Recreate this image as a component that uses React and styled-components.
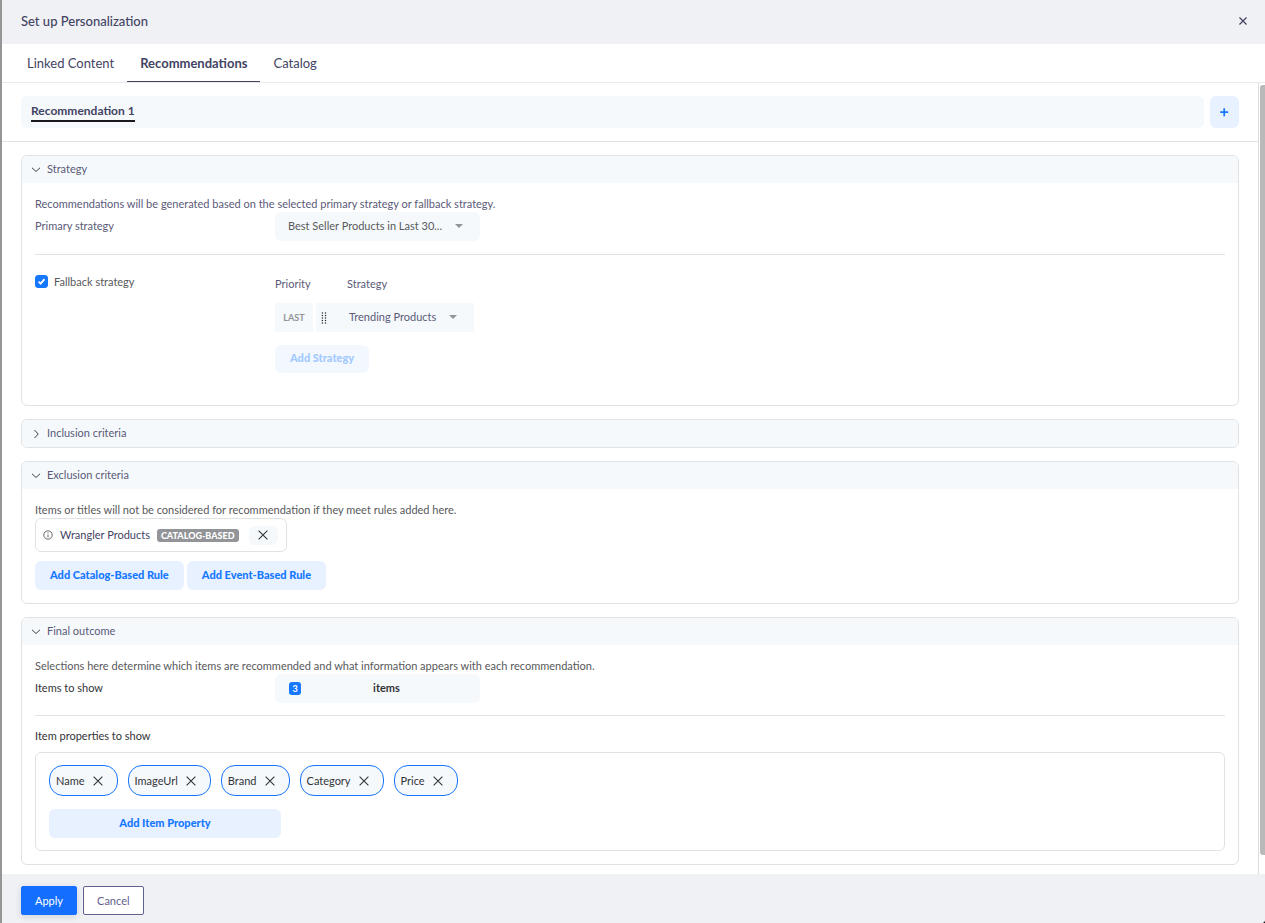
import React, { useState } from "react";
import styled, { createGlobalStyle, css, ThemeProvider } from "styled-components";

const theme = {
  colors: {
    primary: "#1677ff",
    apply: "#146eff",
    tint: "#e7f1ff",
    soft: "#f5f9fc",
    bar: "#f0f1f5",
    border: "#e1e2e4",
    heading: "#434363",
    label: "#5a5a78",
    text: "#58595b",
    dark: "#333438",
  },
  fonts: {
    main: "Lato, 'Liberation Sans', sans-serif",
  },
};

const GlobalStyle = createGlobalStyle`
  * {
    box-sizing: border-box;
  }

  body {
    margin: 0;
    background: #1d1d1f;
    font-family: ${theme.fonts.main};
    font-size: 11px;
    line-height: 16px;
    color: ${theme.colors.text};
  }

  button, input, select {
    font: inherit;
    color: inherit;
  }

  button {
    border: 0;
    padding: 0;
    background: none;
    cursor: pointer;
  }
`;

const Panel = styled.div`
  display: flex;
  flex-direction: column;
  height: 100vh;
  border-left: 2px solid #959595;
  border-bottom-right-radius: 4px;
  background: #fff;
  overflow: hidden;
`;

const Header = styled.header`
  display: flex;
  align-items: center;
  justify-content: space-between;
  flex: none;
  height: 44px;
  padding: 0 18px 3px 19px;
  background: ${({ theme }) => theme.colors.bar};
  color: ${({ theme }) => theme.colors.heading};
`;

const Title = styled.h1`
  margin: 0;
  font-size: 13px;
  line-height: 16px;
  font-weight: 500;
`;

const IconButton = styled.button`
  display: flex;
  align-items: center;
  justify-content: center;
`;

const Tabs = styled.nav`
  display: flex;
  flex: none;
  height: 39px;
  padding-left: 12px;
  border-bottom: 1px solid #e9e9f1;
`;

const Tab = styled.button`
  padding: 0 13px;
  border-bottom: 1px solid transparent;
  font-size: 13px;
  color: ${({ theme }) => theme.colors.heading};
  ${({ $active, theme }) =>
    $active &&
    css`
      font-weight: 700;
      border-bottom-color: ${theme.colors.heading};
    `}
`;

const Main = styled.div`
  display: flex;
  flex: 1;
  min-height: 0;
`;

const Scroll = styled.main`
  flex: 1;
  min-width: 0;
  overflow: hidden;
`;

const ScrollTrack = styled.div`
  flex: none;
  width: 7px;
  padding: 2px 0 19px 1px;
  border-left: 1px solid #dcdcdc;
`;

const ScrollThumb = styled.div`
  height: 100%;
  border-radius: 3px 0 0 3px;
  background: #b9b9b9;
`;

const RecommendationBar = styled.div`
  display: flex;
  gap: 6px;
  padding: 13px 19px;
  border-bottom: 1px solid ${({ theme }) => theme.colors.border};
`;

const RecommendationList = styled.div`
  flex: 1;
  height: 32px;
  padding: 7px 10px 0;
  border-radius: 6px;
  background: ${({ theme }) => theme.colors.soft};
`;

const RecommendationTab = styled.button`
  height: 19px;
  padding-bottom: 2px;
  border-bottom: 2px solid #1a1a1c;
  font-size: 12px;
  font-weight: 700;
  color: ${({ theme }) => theme.colors.heading};
`;

const AddButton = styled(IconButton)`
  width: 29px;
  height: 32px;
  border-radius: 6px;
  background: ${({ theme }) => theme.colors.tint};
  color: ${({ theme }) => theme.colors.primary};
`;

const Cards = styled.div`
  display: flex;
  flex-direction: column;
  gap: 13px;
  padding: 13px 19px;
`;

const Card = styled.section`
  border: 1px solid ${({ theme }) => theme.colors.border};
  border-radius: 6px;
  overflow: hidden;
`;

const CardToggle = styled.button`
  display: flex;
  align-items: center;
  gap: 5px;
  width: 100%;
  height: 27px;
  padding: 0 8px 2px;
  background: ${({ theme }) => theme.colors.soft};
  color: ${({ theme }) => theme.colors.label};
`;

const CardBody = styled.div`
  padding: 13px;
`;

const Description = styled.p`
  margin: 0;
  color: ${({ $tinted, theme }) => ($tinted ? theme.colors.label : theme.colors.text)};
`;

const FieldRow = styled.div`
  display: grid;
  grid-template-columns: 240px 1fr;
  align-items: start;
`;

const FieldLabel = styled.label`
  padding: 6px 0;
  color: ${({ $dark, theme }) => ($dark ? theme.colors.dark : theme.colors.label)};
`;

const Divider = styled.hr`
  margin: ${({ $tight }) => ($tight ? "12px" : "13px")} 0 0;
  border: 0;
  border-top: 1px solid ${({ theme }) => theme.colors.border};
`;

const SelectBox = styled.div`
  display: flex;
  align-items: center;
  position: relative;
  width: ${({ $width }) => $width};
  height: 29px;
  border-radius: ${({ $square }) => ($square ? 0 : "6px")};
  background: ${({ theme }) => theme.colors.soft};
`;

const Select = styled.select`
  width: 100%;
  height: 29px;
  padding: 0 0 2px ${({ $inset }) => $inset};
  border: 0;
  appearance: none;
  background: none;
`;

const Caret = styled.span`
  position: absolute;
  right: 17px;
  top: 12px;
  border: 4px solid transparent;
  border-top-color: #929497;
  border-bottom: 0;
  pointer-events: none;
`;

const Fallback = styled.div`
  display: grid;
  grid-template-columns: 240px 1fr;
  align-items: start;
  padding: 20px 0 19px;
`;

const CheckLabel = styled.label`
  display: flex;
  align-items: center;
  gap: 6px;
  height: 13px;
  position: relative;
`;

const Checkbox = styled.input`
  width: 13px;
  height: 13px;
  margin: 0;
  border: 1px solid ${({ theme }) => theme.colors.primary};
  border-radius: 3px;
  appearance: none;

  &:checked {
    background: ${({ theme }) => theme.colors.primary};
  }
`;

const Tick = styled.svg`
  position: absolute;
  left: 3px;
  top: 3px;
  pointer-events: none;
`;

const PriorityGrid = styled.div`
  display: grid;
  grid-template-columns: 38px 158px;
  column-gap: 3px;
  row-gap: 11px;
  padding-top: 1px;
  color: ${({ theme }) => theme.colors.label};
`;

const StrategyHeading = styled.span`
  padding-left: 31px;
`;

const Last = styled.span`
  display: flex;
  align-items: center;
  justify-content: center;
  height: 29px;
  border-radius: 2px;
  background: ${({ theme }) => theme.colors.soft};
  color: #929497;
  font-size: 9px;
  font-weight: 700;
`;

const Handle = styled.svg`
  flex: none;
  margin-left: 5px;
`;

const SoftButton = styled.button`
  height: ${({ $short }) => ($short ? "28px" : "29px")};
  min-width: ${({ $width }) => $width || "0"};
  padding: 0 15px 2px;
  border-radius: 6px;
  background: ${({ theme }) => theme.colors.tint};
  color: ${({ theme }) => theme.colors.primary};
  font-weight: 900;

  &:disabled {
    background: #f3f8ff;
    color: #a2c9ff;
  }
`;

const StrategyAction = styled.div`
  margin-top: 13px;
`;

const Rule = styled.div`
  display: inline-flex;
  align-items: center;
  height: 34px;
  padding: 0 8px 0 7px;
  border: 1px solid ${({ theme }) => theme.colors.border};
  border-radius: 6px;
  color: ${({ theme }) => theme.colors.heading};
`;

const RuleName = styled.span`
  margin: 0 7px;
`;

const Badge = styled.span`
  height: 13px;
  padding: 0 4px;
  border-radius: 3px;
  background: #929497;
  color: #fff;
  font-size: 9px;
  line-height: 13px;
  font-weight: 900;
`;

const RemoveRule = styled(IconButton)`
  width: 29px;
  height: 19px;
  margin-left: 10px;
  border-radius: 6px;
  background: ${({ theme }) => theme.colors.soft};
  color: ${({ theme }) => theme.colors.dark};
`;

const RuleActions = styled.div`
  display: flex;
  gap: 3px;
  margin-top: 9px;
`;

const RuleLine = styled.div`
  display: flex;
`;

const CountButton = styled.button`
  display: flex;
  align-items: center;
  width: 205px;
  height: 29px;
  padding: 0 8px 1px 14px;
  border-radius: 6px;
  background: ${({ theme }) => theme.colors.soft};
  color: ${({ theme }) => theme.colors.dark};
  font-weight: 700;
`;

const Count = styled.span`
  width: 12px;
  height: 13px;
  border-radius: 3px;
  background: ${({ theme }) => theme.colors.primary};
  color: #fff;
  font-size: 9px;
  line-height: 13px;
`;

const CountUnit = styled.span`
  flex: 1;
`;

const PropertiesTitle = styled.h2`
  margin: 12px 0 8px;
  font-size: 11px;
  line-height: 16px;
  font-weight: 400;
  color: ${({ theme }) => theme.colors.dark};
`;

const Properties = styled.div`
  padding: 12px 13px;
  border: 1px solid ${({ theme }) => theme.colors.border};
  border-radius: 6px;
`;

const Chips = styled.div`
  display: flex;
  gap: 10px;
  margin-bottom: 13px;
`;

const Chip = styled.span`
  display: flex;
  align-items: center;
  gap: 8px;
  height: 31px;
  padding: 0 14px 0 6px;
  border: 1px solid ${({ theme }) => theme.colors.primary};
  border-radius: 14px;
  background: ${({ theme }) => theme.colors.soft};
  color: ${({ theme }) => theme.colors.dark};
`;

const Footer = styled.footer`
  display: flex;
  flex: none;
  gap: 6px;
  padding: 12px 19px 8px;
  background: ${({ theme }) => theme.colors.bar};
`;

const FooterButton = styled.button`
  height: 29px;
  padding: 0 13px;
  border: 1px solid #5f6290;
  border-radius: 2px;
  background: #fff;
  color: #5f6290;
  ${({ $primary, theme }) =>
    $primary &&
    css`
      border-color: ${theme.colors.apply};
      background: ${theme.colors.apply};
      color: #fff;
      box-shadow: 0 2px 6px rgba(30, 40, 80, 0.15);
    `}
`;

const Chevron = ({ open }) => (
  <svg width="12" height="12" viewBox="0 0 12 12" fill="none" stroke="#3c3d45" strokeWidth="1">
    <path d={open ? "M2 4.8 L6 8.5 L10 4.8" : "M4.5 3 L8.2 7 L4.5 11"} />
  </svg>
);

const Cross = ({ size = 10, weight = 1.1 }) => (
  <svg width={size} height={size} viewBox="0 0 10 10" fill="none" stroke="currentColor" strokeWidth={weight}>
    <path d="M0.6 0.6 L9.4 9.4 M9.4 0.6 L0.6 9.4" />
  </svg>
);

const Section = ({ title, children }) => {
  const [open, setOpen] = useState(Boolean(children));
  return (
    <Card>
      <CardToggle aria-expanded={open} onClick={() => setOpen(!open)}>
        <Chevron open={open} />
        {title}
      </CardToggle>
      {open && children && <CardBody>{children}</CardBody>}
    </Card>
  );
};

const tabs = ["Linked Content", "Recommendations", "Catalog"];

const App = () => {
  const [tab, setTab] = useState("Recommendations");
  const [fallback, setFallback] = useState(true);
  const [properties, setProperties] = useState(["Name", "ImageUrl", "Brand", "Category", "Price"]);

  return (
    <ThemeProvider theme={theme}>
      <GlobalStyle />
      <Panel>
        <Header>
          <Title>Set up Personalization</Title>
          <IconButton aria-label="Close">
            <Cross size={8} weight={1.6} />
          </IconButton>
        </Header>

        <Tabs>
          {tabs.map((name) => (
            <Tab key={name} $active={name === tab} onClick={() => setTab(name)}>
              {name}
            </Tab>
          ))}
        </Tabs>

        <Main>
          <Scroll>
            <RecommendationBar>
              <RecommendationList>
                <RecommendationTab>Recommendation 1</RecommendationTab>
              </RecommendationList>
              <AddButton aria-label="Add recommendation">
                <svg width="9" height="9" viewBox="0 0 9 9" stroke="currentColor" strokeWidth="1.7">
                  <path d="M4.2 0.2 V8.2 M0.2 4.2 H8.2" />
                </svg>
              </AddButton>
            </RecommendationBar>

            <Cards>
              <Section title="Strategy">
                <Description $tinted>
                  Recommendations will be generated based on the selected primary strategy or fallback strategy.
                </Description>
                <FieldRow>
                  <FieldLabel htmlFor="primary">Primary strategy</FieldLabel>
                  <SelectBox $width="205px">
                    <Select id="primary" $inset="13px">
                      <option>Best Seller Products in Last 30...</option>
                    </Select>
                    <Caret />
                  </SelectBox>
                </FieldRow>
                <Divider />
                <Fallback>
                  <CheckLabel>
                    <Checkbox type="checkbox" checked={fallback} onChange={() => setFallback(!fallback)} />
                    <Tick width="7" height="7" viewBox="0 0 7 7" fill="none" stroke="#fff" strokeWidth="1.8">
                      <path d="M0.5 3.6 L2.6 5.6 L6.5 1.2" />
                    </Tick>
                    Fallback strategy
                  </CheckLabel>
                  <div>
                    <PriorityGrid>
                      <span>Priority</span>
                      <StrategyHeading>Strategy</StrategyHeading>
                      <Last>LAST</Last>
                      <SelectBox $width="158px" $square>
                        <Handle width="6" height="12" viewBox="0 0 6 12" fill="#2c2d33">
                          {[0.9, 3.4, 5.9, 8.4, 10.9].map((y) => (
                            <g key={y}>
                              <circle cx="1.4" cy={y} r="0.75" />
                              <circle cx="4.5" cy={y} r="0.75" />
                            </g>
                          ))}
                        </Handle>
                        <Select aria-label="Fallback strategy option" $inset="22px">
                          <option>Trending Products</option>
                        </Select>
                        <Caret />
                      </SelectBox>
                    </PriorityGrid>
                    <StrategyAction>
                      <SoftButton $short disabled>
                        Add Strategy
                      </SoftButton>
                    </StrategyAction>
                  </div>
                </Fallback>
              </Section>

              <Section title="Inclusion criteria" />

              <Section title="Exclusion criteria">
                <Description>
                  Items or titles will not be considered for recommendation if they meet rules added here.
                </Description>
                <RuleLine>
                  <Rule>
                    <svg width="10" height="10" viewBox="0 0 10 10" fill="none" stroke="#58595b" strokeWidth="0.9">
                      <circle cx="5" cy="5" r="4.2" />
                      <path d="M5 4.4 V7.4 M5 2.4 V3.4" />
                    </svg>
                    <RuleName>Wrangler Products</RuleName>
                    <Badge>CATALOG-BASED</Badge>
                    <RemoveRule aria-label="Remove rule">
                      <Cross />
                    </RemoveRule>
                  </Rule>
                </RuleLine>
                <RuleActions>
                  <SoftButton>Add Catalog-Based Rule</SoftButton>
                  <SoftButton>Add Event-Based Rule</SoftButton>
                </RuleActions>
              </Section>

              <Section title="Final outcome">
                <Description>
                  Selections here determine which items are recommended and what information appears with each
                  recommendation.
                </Description>
                <FieldRow>
                  <FieldLabel $dark htmlFor="count">
                    Items to show
                  </FieldLabel>
                  <CountButton id="count">
                    <Count>3</Count>
                    <CountUnit>items</CountUnit>
                  </CountButton>
                </FieldRow>
                <Divider $tight />
                <PropertiesTitle>Item properties to show</PropertiesTitle>
                <Properties>
                  <Chips>
                    {properties.map((name) => (
                      <Chip key={name}>
                        {name}
                        <IconButton
                          aria-label={`Remove ${name}`}
                          onClick={() => setProperties(properties.filter((item) => item !== name))}
                        >
                          <Cross />
                        </IconButton>
                      </Chip>
                    ))}
                  </Chips>
                  <SoftButton $width="232px">Add Item Property</SoftButton>
                </Properties>
              </Section>
            </Cards>
          </Scroll>
          <ScrollTrack>
            <ScrollThumb />
          </ScrollTrack>
        </Main>

        <Footer>
          <FooterButton $primary>Apply</FooterButton>
          <FooterButton>Cancel</FooterButton>
        </Footer>
      </Panel>
    </ThemeProvider>
  );
};

export default App;
